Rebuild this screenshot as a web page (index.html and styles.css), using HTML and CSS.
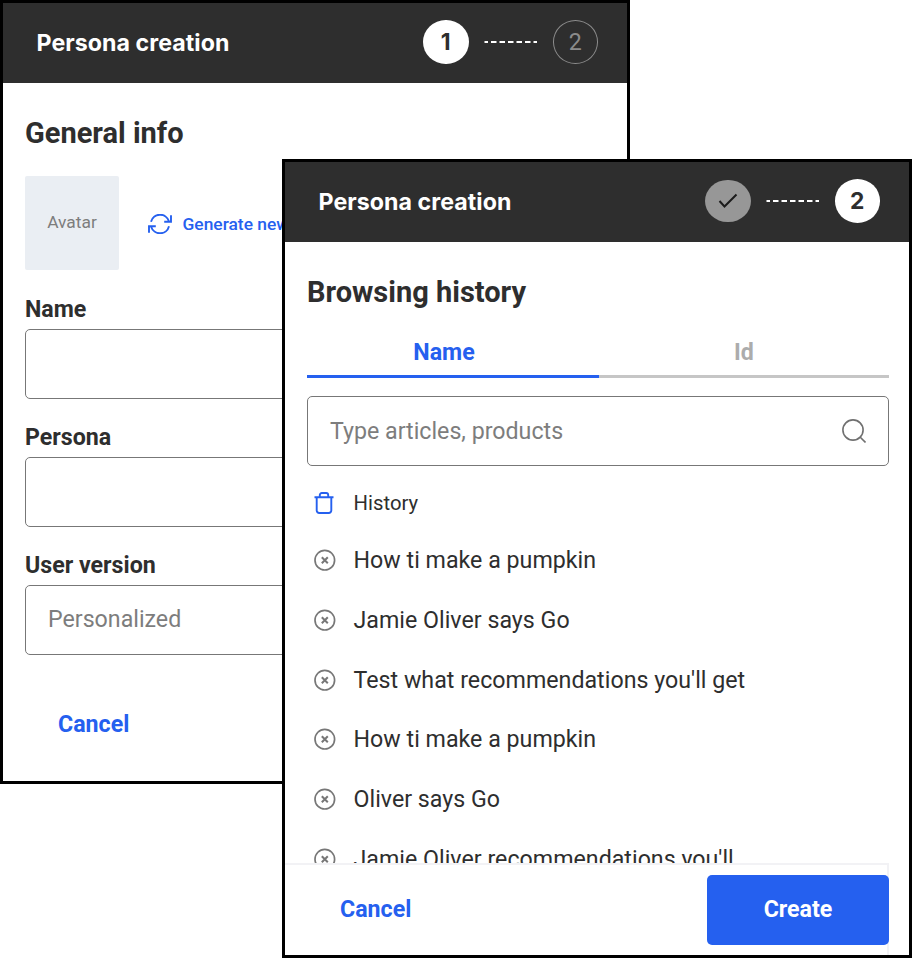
FILE: index.html
```html
<!DOCTYPE html>
<html lang="en">
<head>
<meta charset="utf-8">
<title>Persona creation</title>
<link rel="stylesheet" href="styles.css">
</head>
<body>
<svg class="defs" width="0" height="0" aria-hidden="true">
  <symbol id="remove" viewBox="0 0 22 22"><circle cx="10.800" cy="11.200" r="9.800" fill="none" stroke="#777" stroke-width="1.700"/><path d="M7.800 8.200l6 6M13.800 8.200l-6 6" fill="none" stroke="#777" stroke-width="2"/></symbol>
  <symbol id="dashes" viewBox="0 0 54 2"><path d="M.5 1H4M7 1h5.500M15.500 1H21M24 1h5.500M32.500 1H38M41 1h5.500M49.500 1H53" stroke="#fff" stroke-width="1.800"/></symbol>
</svg>

<section class="window window-general">
  <header class="bar">
    <h1 class="bar-title">Persona creation</h1>
    <div class="steps">
      <span class="step step-current">1</span>
      <svg class="dashes"><use href="#dashes"/></svg>
      <span class="step step-next">2</span>
    </div>
  </header>
  <div class="content">
    <h2 class="heading">General info</h2>
    <div class="avatar-row">
      <div class="avatar">Avatar</div>
      <button class="generate">
        <svg class="refresh" viewBox="0 0 24 20" fill="none" stroke="#2560ef" stroke-width="1.900"><path d="M3 7.800A9.300 9.300 0 0 1 20.900 7.200M23 1.300v6.500h-6.800M21 12.200A9.300 9.300 0 0 1 3.100 12.800M1 18.700v-6.500h6.800"/></svg>
        <span>Generate new</span>
      </button>
    </div>
    <label class="field"><span class="label">Name</span><span class="input"></span></label>
    <label class="field"><span class="label">Persona</span><span class="input"></span></label>
    <label class="field"><span class="label">User version</span><span class="input">Personalized</span></label>
    <button class="cancel">Cancel</button>
  </div>
</section>

<section class="window window-history">
  <header class="bar">
    <h1 class="bar-title">Persona creation</h1>
    <div class="steps">
      <span class="step step-done"><svg class="check" viewBox="0 0 20 16"><path d="M1.500 8l5 5.500L18.500 1.500" fill="none" stroke="#1c1c1c" stroke-width="2"/></svg></span>
      <svg class="dashes"><use href="#dashes"/></svg>
      <span class="step step-current">2</span>
    </div>
  </header>
  <div class="content">
    <h2 class="heading">Browsing history</h2>
    <nav class="tabs">
      <span class="tab tab-active">Name</span>
      <span class="tab">Id</span>
    </nav>
    <div class="input search">
      <span>Type articles, products</span>
      <svg class="magnifier" viewBox="0 0 24 24" fill="none" stroke="#707070" stroke-width="1.600"><circle cx="11" cy="11" r="10.100"/><path d="M18 18l5.500 5.500"/></svg>
    </div>
    <ul class="list">
      <li class="item item-clear"><svg class="trash" viewBox="0 0 20 22" fill="none" stroke="#2560ef" stroke-width="1.900"><path d="M.5 5.200h19M2.700 5.200v13.300a2.500 2.500 0 0 0 2.500 2.500h9.600a2.500 2.500 0 0 0 2.500-2.500V5.200M5.800 5.200V3a2 2 0 0 1 2-2h4.400a2 2 0 0 1 2 2v2.200"/></svg><span>History</span></li>
      <li class="item"><svg class="remove"><use href="#remove"/></svg><span>How ti make a pumpkin</span></li>
      <li class="item"><svg class="remove"><use href="#remove"/></svg><span>Jamie Oliver says Go</span></li>
      <li class="item"><svg class="remove"><use href="#remove"/></svg><span>Test what recommendations you'll get</span></li>
      <li class="item"><svg class="remove"><use href="#remove"/></svg><span>How ti make a pumpkin</span></li>
      <li class="item"><svg class="remove"><use href="#remove"/></svg><span>Oliver says Go</span></li>
      <li class="item"><svg class="remove"><use href="#remove"/></svg><span>Jamie Oliver recommendations you'll</span></li>
    </ul>
  </div>
  <footer class="footer">
    <button class="cancel">Cancel</button>
    <button class="create">Create</button>
  </footer>
</section>
</body>
</html>
```
FILE: styles.css
```css
* { box-sizing: border-box; margin: 0; padding: 0; }
body { position: relative; width: 912px; height: 958px; overflow: hidden; background: #fff; color: #2e2e2e; font: 23.2px/28px Roboto, sans-serif; }
button { border: 0; background: none; font: inherit; white-space: nowrap; }
svg { display: block; flex: none; }
.defs { position: absolute; }
.window { position: absolute; width: 630px; border: 3px solid #000; background: #fff; overflow: hidden; }
.window-general { left: 0; top: 0; height: 784px; }
.window-history { left: 282px; top: 159px; height: 798.6px; display: flex; flex-direction: column; }

.bar { flex: none; height: 80px; padding: 0 29px 2px 33.5px; display: flex; align-items: center; justify-content: space-between; background: #2e2e2e; }
.bar-title { padding-top: 2px; color: #fff; font: 700 23.2px/28px Inter, sans-serif; letter-spacing: 0.05px; }
.steps { display: flex; align-items: center; gap: 15px; }
.step { width: 45.500px; height: 44px; border-radius: 50%; display: flex; align-items: center; justify-content: center; font: 700 22.8px/28px Inter, sans-serif; }
.step-current { background: #fff; color: #2e2e2e; }
.step-next { border: 1.500px solid #8b8b8b; color: #8b8b8b; font: 400 23.2px/28px Roboto, sans-serif; }
.step-done { height: 42.500px; background: #979797; }
.check { width: 20px; height: 16px; }
.dashes { width: 54px; height: 2px; }

.content { padding: 32px 20px 0 22px; }
.window-history .content { flex: 1; min-height: 0; overflow: hidden; }
.heading { font-size: 29px; line-height: 36px; font-weight: 700; }
.avatar-row { margin-top: 25px; display: flex; align-items: center; gap: 29px; }
.avatar { width: 94px; height: 94px; border-radius: 2px; background: #eaeef3; color: #7d7d7d; font-size: 17.400px; padding-bottom: 2px; display: flex; align-items: center; justify-content: center; }
.generate { display: flex; align-items: center; gap: 10.500px; color: #2560ef; font-size: 17.400px; font-weight: 500; margin-top: 2px; }
.refresh { width: 24px; height: 20px; }
.field { display: block; height: 128px; padding-top: 25px; }
.label { display: block; height: 34px; font-weight: 700; }
.input { height: 69.500px; padding: 0 22px 2px; border: 1.500px solid #777; border-radius: 5px; display: flex; align-items: center; color: #7d7d7d; }
.cancel { margin: 56px 0 0 33px; color: #2560ef; font-weight: 700; }

.tabs { margin-top: 19px; display: flex; }
.tab { flex: 1; height: 48.500px; padding-top: 9px; border-bottom: 3px solid #c6c6c6; text-align: center; color: #acacac; font-weight: 700; }
.tab-active { flex: 0 0 292px; padding-right: 18px; border-color: #2560ef; color: #2560ef; }
.search { margin-top: 18.500px; height: 70px; padding-bottom: 0; justify-content: space-between; }
.magnifier { width: 24px; height: 24px; }
.list { margin-top: 9px; list-style: none; }
.item { height: 59.700px; padding-left: 7px; display: flex; align-items: center; gap: 17.500px; white-space: nowrap; letter-spacing: 0.02px; }
.item-clear { height: 55.500px; font-size: 20.300px; gap: 19.500px; }
.trash { width: 20px; height: 22px; }
.remove { width: 22px; height: 22px; }
.footer { flex: none; height: 91.500px; width: 604px; border-top: 2px solid #f2f2f5; border-right: 2px solid #f2f2f5; display: flex; justify-content: space-between; align-items: flex-start; background: #fff; }
.footer .cancel { margin: 30px 0 0 55px; }
.create { width: 182px; height: 69.500px; padding-bottom: 1px; margin: 10px -2px 0 0; border-radius: 5px; background: #2560ef; color: #fff; font-weight: 700; flex: none; }
```
